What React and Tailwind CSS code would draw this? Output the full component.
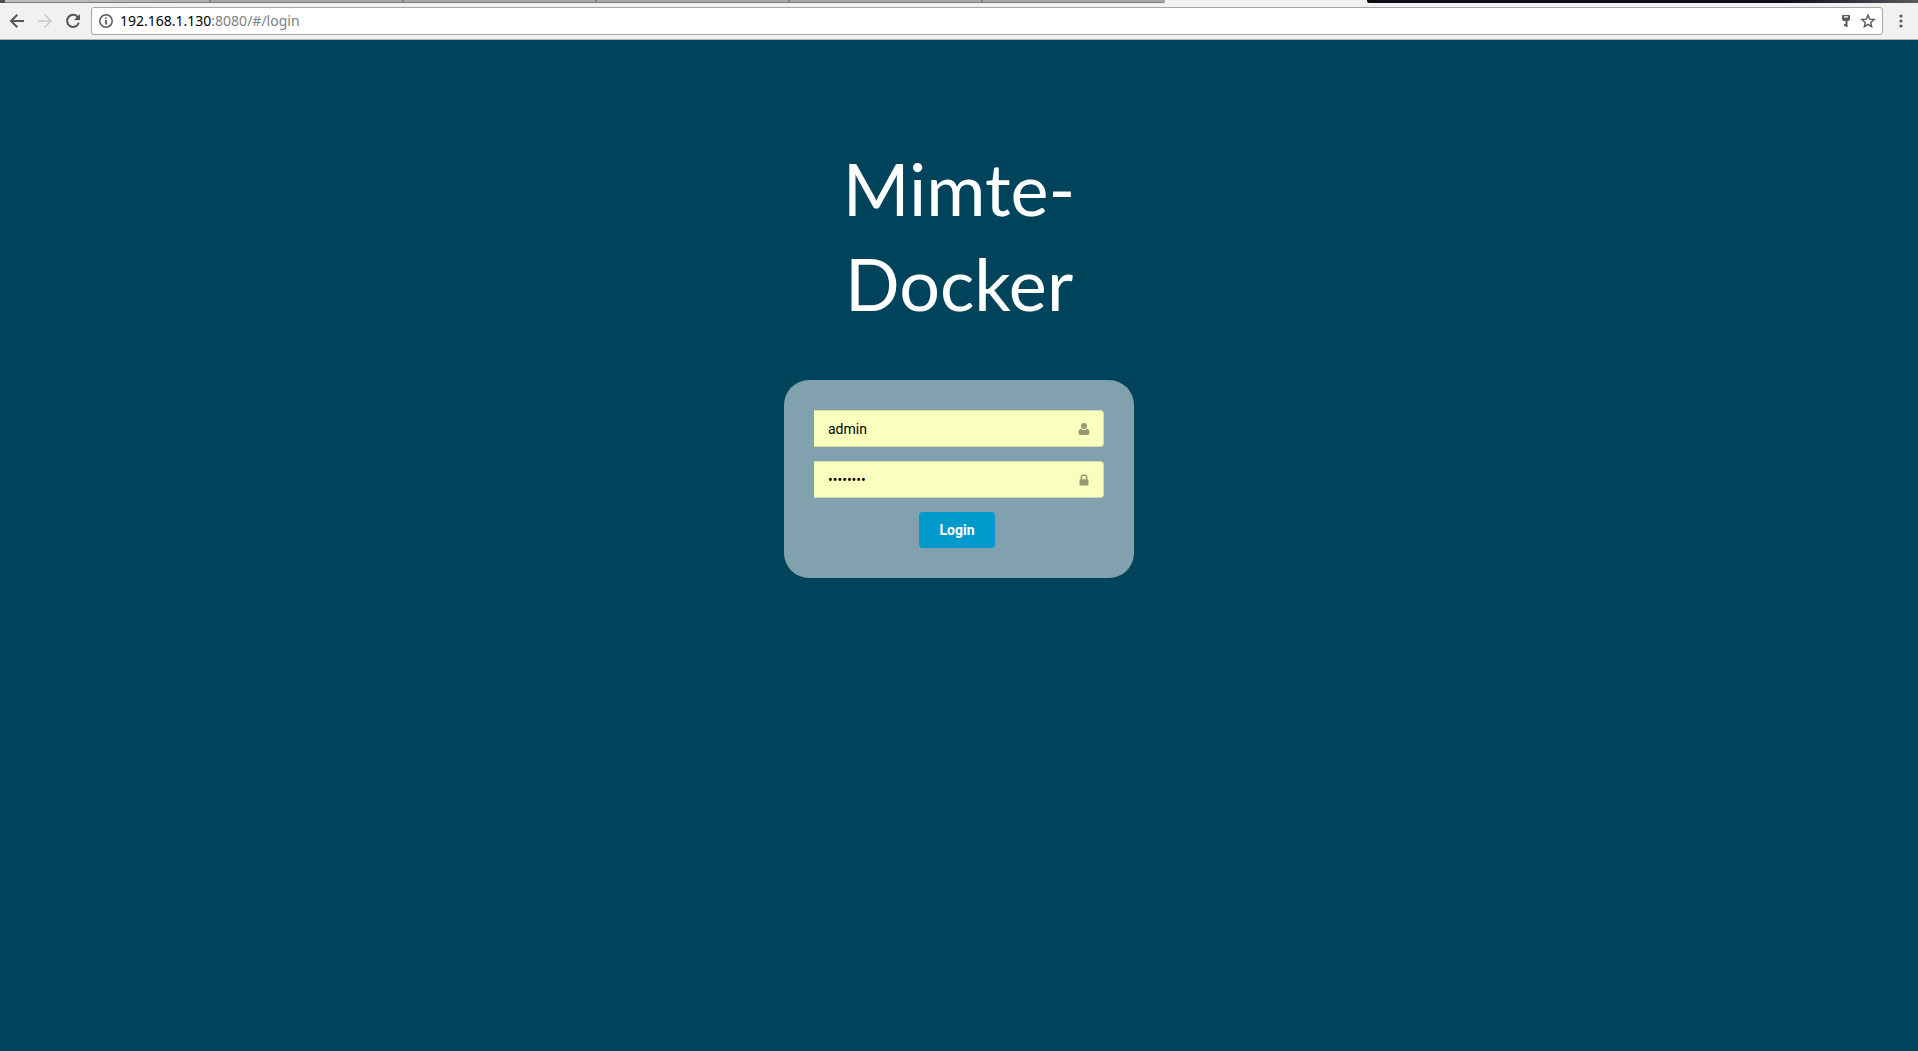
const tabs = [1, 2, 3, 4, 5, 6];

function TabStrip() {
  return (
    <div className="flex h-[3px] bg-[#f1f1f1]" aria-hidden="true">
      <div className="w-[5px] shrink-0 bg-[#4d4f51]" />
      <div className="flex w-[1160px] shrink-0 overflow-hidden rounded-br-[2px] border-b border-[#7d7d7d] bg-[#a9a9a9]">
        {tabs.map((tab) => (
          <div
            key={tab}
            className="w-[193px] shrink-0 border-r-2 border-[#858585] first:w-[206px] first:bg-linear-to-r first:from-[#c0c0c0] first:to-[#b0b0b0] last:border-r-0"
          />
        ))}
      </div>
      <div className="w-[202px] shrink-0" />
      <div className="flex-1 rounded-bl-[2px] bg-linear-to-r from-[#0b0d13] from-75% to-[#5a5d60]" />
    </div>
  );
}

function Toolbar() {
  return (
    <div className="flex h-[37px] items-center border-b border-[#b3b3b3] bg-[#f1f1f1]">
      <nav className="flex items-center gap-1 pl-[5px]" aria-label="Browser">
        <button type="button" aria-label="Back" className="flex size-6 items-center justify-center text-[#565656]">
          <svg viewBox="0 0 16 16" className="size-4" fill="none" stroke="currentColor" strokeWidth="2">
            <path d="M15 8H2.5M8.3 1.8 2.1 8l6.2 6.2" />
          </svg>
        </button>
        <button type="button" aria-label="Forward" className="flex size-6 items-center justify-center text-[#d2d2d2]">
          <svg viewBox="0 0 16 16" className="size-4" fill="none" stroke="currentColor" strokeWidth="2">
            <path d="M1 8h12.5M7.7 1.8 13.9 8l-6.2 6.2" />
          </svg>
        </button>
        <button type="button" aria-label="Reload" className="flex size-6 items-center justify-center text-[#565656]">
          <svg viewBox="0 0 16 16" className="size-4" fill="none" stroke="currentColor" strokeWidth="2">
            <path d="M13 4.4A6 6 0 1 0 13.8 9.7" />
            <path d="M15 1v6H9z" fill="currentColor" stroke="none" />
          </svg>
        </button>
      </nav>
      <div className="ml-[6px] flex h-7 flex-1 items-center rounded-[3px] border border-[#a6a6a6] bg-white pr-[6px] pl-[7px]">
        <svg viewBox="0 0 14 14" className="size-[14px] shrink-0 text-[#5a5a5a]" fill="none" stroke="currentColor" aria-hidden="true">
          <circle cx="7" cy="7" r="6.2" strokeWidth="1.5" />
          <path d="M7 6v4.4M7 3.4v1.4" strokeWidth="1.8" />
        </svg>
        <div className="ml-[7px] flex-1 font-['Noto_Sans','Open_Sans',sans-serif] text-[14px] leading-5 text-[#808080]">
          <span className="text-black">192.168.1.130</span>:8080/#/login
        </div>
        <button type="button" aria-label="Saved passwords" className="mr-[9px] text-[#5a5a5a]">
          <svg viewBox="0 0 10 14" className="h-[14px] w-[10px]" fill="currentColor">
            <path fillRule="evenodd" d="M2 1h6a1 1 0 0 1 1 1v3.500L7.500 7H6.500v6h-2v-1H3v-2h1.500V7h-2L1 5.500V2a1 1 0 0 1 1-1Zm1 1.300v1.200h4V2.300Z" />
          </svg>
        </button>
        <button type="button" aria-label="Bookmark this page" className="text-[#5a5a5a]">
          <svg viewBox="0 0 16 16" className="size-4" fill="none" stroke="currentColor" strokeWidth="1.4">
            <path d="m8 2 1.700 4.100 4.400.4-3.400 2.900 1 4.300L8 11.400l-3.700 2.300 1-4.300-3.400-2.900 4.400-.4Z" />
          </svg>
        </button>
      </div>
      <button type="button" aria-label="Menu" className="mr-[5px] ml-[6px] flex h-6 w-6 items-center justify-center text-[#5a5a5a]">
        <svg viewBox="0 0 4 14" className="h-[14px] w-1" fill="currentColor">
          <circle cx="2" cy="2" r="1.6" />
          <circle cx="2" cy="7" r="1.6" />
          <circle cx="2" cy="12" r="1.6" />
        </svg>
      </button>
    </div>
  );
}

function Field({ label, type, value, icon }) {
  return (
    <div className="relative">
      <input
        type={type}
        aria-label={label}
        defaultValue={value}
        className="block h-[37px] w-full rounded-r-[4px] border-y border-r border-[#d5daa6] bg-[#faffbd] pr-10 pl-[14px] text-[14px] text-black outline-none"
      />
      <svg viewBox="0 0 12 12" className="absolute top-[13px] right-[14px] size-3 text-[#969972]" fill="currentColor" aria-hidden="true">
        {icon}
      </svg>
    </div>
  );
}

export default function App() {
  return (
    <div className="flex min-h-screen flex-col bg-[#00445b] font-[Roboto,sans-serif]">
      <header>
        <TabStrip />
        <Toolbar />
      </header>
      <main className="mx-auto w-[350px] pt-[101px]">
        <h1 className="text-center font-[Lato,sans-serif] text-[72px] leading-[95px] font-normal text-white">
          Mimte-
          <br />
          Docker
        </h1>
        <form className="mt-[49px] flex flex-col gap-[14px] rounded-[25px] bg-[#80a1ad] p-[30px]" onSubmit={(e) => e.preventDefault()}>
          <Field
            label="Username"
            type="text"
            value="admin"
            icon={
              <>
                <circle cx="6" cy="3" r="3" />
                <path d="M3 5.800C1 6 .5 7.600.5 9.800c0 1.400.9 2.200 2 2.200h7c1.100 0 2-.8 2-2.200 0-2.200-.5-3.800-2.500-4C8.200 6.600 7.100 7 6 7s-2.200-.4-3-1.200Z" />
              </>
            }
          />
          <Field
            label="Password"
            type="password"
            value="password"
            icon={
              <>
                <path d="M3.300 6V3.700a2.700 2.700 0 0 1 5.400 0V6" fill="none" stroke="currentColor" strokeWidth="1.500" />
                <rect x="1.500" y="5.300" width="9" height="6.200" rx=".8" />
              </>
            }
          />
          <button
            type="submit"
            className="mr-1 h-9 self-center rounded-[4px] bg-[#0099cc] px-5 text-[14px] font-bold text-white"
          >
            Login
          </button>
        </form>
      </main>
    </div>
  );
}
